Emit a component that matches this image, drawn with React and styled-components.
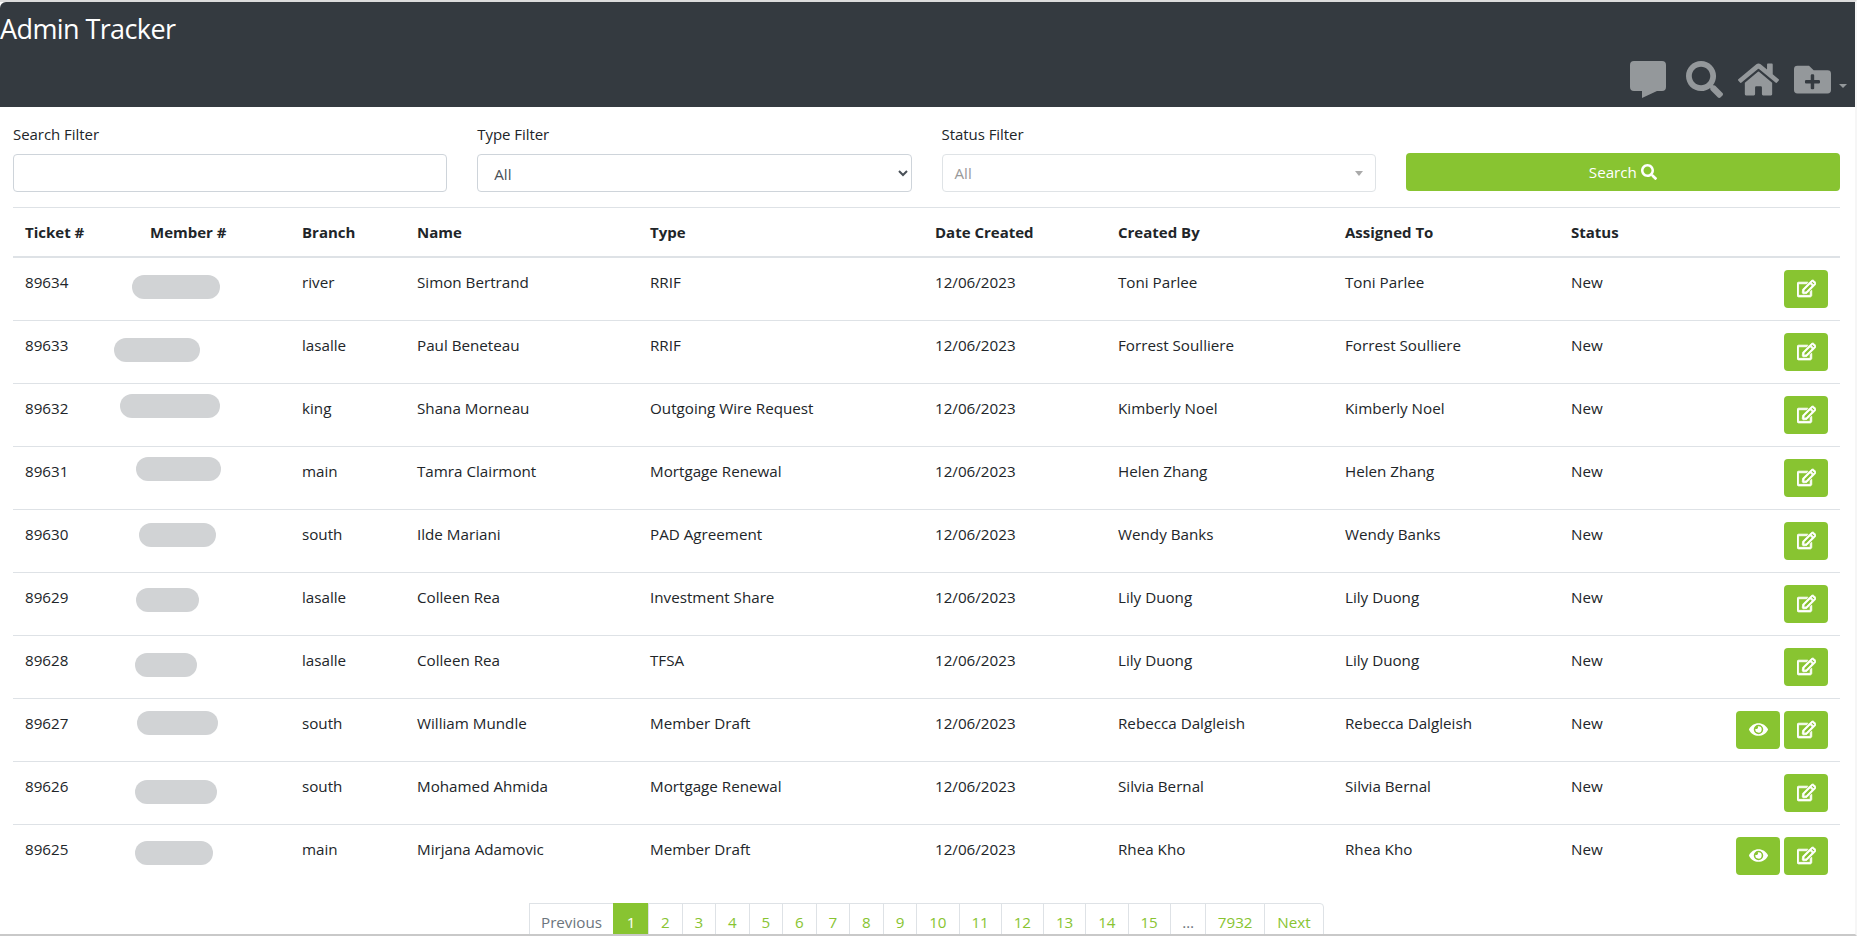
import React from "react";
import styled, { createGlobalStyle } from "styled-components";
import { FaSearch, FaHome, FaFolderPlus, FaRegEdit, FaEye } from "react-icons/fa";

const GlobalStyle = createGlobalStyle`
    html, body {
        margin: 0;
        height: 100%;
        overflow: hidden;
        background-color: #fff;
    }

    body {
        font-family: "Open Sans", "Liberation Sans", sans-serif;
        font-size: 15.2px;
        color: #212529;
    }
`;

const COLUMNS = [
    { title: "Ticket #", width: 125 },
    { title: "Member #", width: 152 },
    { title: "Branch", width: 115 },
    { title: "Name", width: 233 },
    { title: "Type", width: 285 },
    { title: "Date Created", width: 183 },
    { title: "Created By", width: 227 },
    { title: "Assigned To", width: 226 },
    { title: "Status", width: 281 },
];

// blob = the greyed out member number, offsets are from the member cell
const TICKETS = [
    { id: 89634, branch: "river", name: "Simon Bertrand", type: "RRIF", staff: "Toni Parlee", blob: [-6, 17, 88] },
    { id: 89633, branch: "lasalle", name: "Paul Beneteau", type: "RRIF", staff: "Forrest Soulliere", blob: [-24, 17, 86] },
    { id: 89632, branch: "king", name: "Shana Morneau", type: "Outgoing Wire Request", staff: "Kimberly Noel", blob: [-18, 10, 100] },
    { id: 89631, branch: "main", name: "Tamra Clairmont", type: "Mortgage Renewal", staff: "Helen Zhang", blob: [-2, 10, 85] },
    { id: 89630, branch: "south", name: "Ilde Mariani", type: "PAD Agreement", staff: "Wendy Banks", blob: [1, 13, 77] },
    { id: 89629, branch: "lasalle", name: "Colleen Rea", type: "Investment Share", staff: "Lily Duong", blob: [-2, 15, 63] },
    { id: 89628, branch: "lasalle", name: "Colleen Rea", type: "TFSA", staff: "Lily Duong", blob: [-3, 17, 62] },
    { id: 89627, branch: "south", name: "William Mundle", type: "Member Draft", staff: "Rebecca Dalgleish", blob: [-1, 12, 81], viewable: true },
    { id: 89626, branch: "south", name: "Mohamed Ahmida", type: "Mortgage Renewal", staff: "Silvia Bernal", blob: [-3, 18, 82] },
    { id: 89625, branch: "main", name: "Mirjana Adamovic", type: "Member Draft", staff: "Rhea Kho", blob: [-3, 16, 78], viewable: true },
];

const PAGES = ["1", "2", "3", "4", "5", "6", "7", "8", "9", "10", "11", "12", "13", "14", "15", "…", "7932"];

function pageWidth(page) {
    if (page === "1") return 36;
    if (page === "…") return 36.6;
    if (page.length === 1) return 34.54;
    if (page.length === 2) return 43.25;
    return 59.6;
}

function CommentIcon() {
    return (
        <svg width="36" height="37" viewBox="0 0 36 37" fill="currentColor">
            <path d="M4 0h28a4 4 0 0 1 4 4v22a4 4 0 0 1-4 4H27L12 37v-7H4a4 4 0 0 1-4-4V4a4 4 0 0 1 4-4z" />
        </svg>
    );
}

export default function App() {
    return (
        <Page>
            <GlobalStyle />
            <Header>
                <Title>Admin Tracker</Title>
                <HeaderIcons>
                    <HeaderIcon $gap={20}><CommentIcon /></HeaderIcon>
                    <HeaderIcon $gap={15}><FaSearch size={37} /></HeaderIcon>
                    <HeaderIcon $gap={15}><FaHome size={41} /></HeaderIcon>
                    <HeaderIcon $gap={8}><FaFolderPlus size={37} /></HeaderIcon>
                    <Caret />
                </HeaderIcons>
            </Header>

            <Filters>
                <Field>
                    <Label>Search Filter</Label>
                    <TextInput type="text" />
                </Field>
                <Field>
                    <Label>Type Filter</Label>
                    <NativeSelect defaultValue="All">
                        <option>All</option>
                    </NativeSelect>
                </Field>
                <Field>
                    <Label>Status Filter</Label>
                    <FakeSelect>
                        All
                        <FakeSelectArrow />
                    </FakeSelect>
                </Field>
                <SearchButton>
                    Search <FaSearch size={16} />
                </SearchButton>
            </Filters>

            <Table>
                <colgroup>
                    {COLUMNS.map((column) => (
                        <col key={column.title} width={column.width} />
                    ))}
                </colgroup>
                <thead>
                    <tr>
                        {COLUMNS.map((column) => (
                            <HeadCell key={column.title}>{column.title}</HeadCell>
                        ))}
                    </tr>
                </thead>
                <tbody>
                    {TICKETS.map((ticket) => (
                        <Row key={ticket.id}>
                            <Cell>{ticket.id}</Cell>
                            <Cell>
                                <Redacted $left={ticket.blob[0]} $top={ticket.blob[1]} $width={ticket.blob[2]} />
                            </Cell>
                            <Cell>{ticket.branch}</Cell>
                            <Cell>{ticket.name}</Cell>
                            <Cell>{ticket.type}</Cell>
                            <Cell>12/06/2023</Cell>
                            <Cell>{ticket.staff}</Cell>
                            <Cell>{ticket.staff}</Cell>
                            <Cell>
                                <StatusCell>
                                    New
                                    <Actions>
                                        {ticket.viewable && <ActionButton><FaEye size={19} /></ActionButton>}
                                        <ActionButton><FaRegEdit size={19} stroke="currentColor" strokeWidth={24} /></ActionButton>
                                    </Actions>
                                </StatusCell>
                            </Cell>
                        </Row>
                    ))}
                </tbody>
            </Table>

            <Pagination>
                <PageLink $muted $width={85}>Previous</PageLink>
                {PAGES.map((page) => (
                    <PageLink key={page} $width={pageWidth(page)} $active={page === "1"} $muted={page === "…"}>{page}</PageLink>
                ))}
                <PageLink $width={60} $last>Next</PageLink>
            </Pagination>
        </Page>
    );
}

const Page = styled.div`
    height: 100vh;
    box-sizing: border-box;
    overflow: hidden;
    background-color: white;
    border-top: 2px solid #dcdcdc;
    border-bottom: 2px solid #c9c9c9;
    border-right: 2px solid #f6f6f6;
`;

const Header = styled.div`
    height: 105px;
    box-sizing: border-box;
    background-color: #343a40;
    border-top-left-radius: 6px;
    display: flex;
    flex-direction: column;
    justify-content: space-between;
    padding: 5px 8px 9px 0;
`;

const Title = styled.div`
    font-size: 27px;
    line-height: 44px;
    color: white;
    letter-spacing: -0.6px;
`;

const HeaderIcons = styled.div`
    display: flex;
    justify-content: flex-end;
    align-items: center;
    height: 37px;
    color: #94989b;
`;

const HeaderIcon = styled.span`
    display: flex;
    margin-right: ${(props) => props.$gap}px;
`;

const Caret = styled.span`
    width: 0;
    height: 0;
    margin-top: 12px;
    border-top: 4px solid #94989b;
    border-left: 4px solid transparent;
    border-right: 4px solid transparent;
`;

const Filters = styled.div`
    display: grid;
    grid-template-columns: repeat(4, 1fr);
    column-gap: 30px;
    align-items: end;
    padding: 0 15px 15px 13px;
    height: 100px;
    box-sizing: border-box;
`;

const Field = styled.div`
    display: flex;
    flex-direction: column;
    gap: 8px;
`;

const Label = styled.label`
    font-size: 15px;
    line-height: 24px;
    letter-spacing: -0.05px;
`;

const TextInput = styled.input`
    height: 38px;
    box-sizing: border-box;
    border: 1px solid #ced4da;
    border-radius: 4px;
    background-color: white;
    outline: none;
`;

const NativeSelect = styled.select`
    height: 38px;
    box-sizing: border-box;
    border: 1px solid #ced4da;
    border-radius: 4px;
    background-color: white;
    color: #495057;
    font: inherit;
    padding: 1px 12px 0;
`;

const FakeSelect = styled.div`
    position: relative;
    height: 38px;
    box-sizing: border-box;
    border: 1px solid #dfe3e6;
    border-radius: 4px;
    color: #999;
    padding-left: 12px;
    line-height: 36px;
`;

const FakeSelectArrow = styled.span`
    position: absolute;
    right: 12px;
    top: 16px;
    border-top: 5px solid #aaa;
    border-left: 4px solid transparent;
    border-right: 4px solid transparent;
`;

const SearchButton = styled.button`
    height: 38px;
    margin-bottom: 1px;
    border: none;
    border-radius: 4px;
    background-color: #88c431;
    color: white;
    font: inherit;
    font-size: 15.2px;
    display: flex;
    align-items: center;
    justify-content: center;
    gap: 4px;
`;

const Table = styled.table`
    width: 1827px;
    margin-left: 13px;
    table-layout: fixed;
    border-collapse: collapse;
    text-align: left;
`;

const HeadCell = styled.th`
    height: 49px;
    box-sizing: border-box;
    padding: 12px 12px 11px;
    line-height: 24px;
    font-size: 15px;
    font-weight: 700;
    border-top: 1px solid #dee2e6;
    border-bottom: 2px solid #dee2e6;
`;

const Row = styled.tr`
    border-bottom: 1px solid #dee2e6;

    &:last-child {
        border-bottom: none;
    }
`;

const Cell = styled.td`
    position: relative;
    padding: 12px;
    height: 62px;
    box-sizing: border-box;
    line-height: 24px;
    vertical-align: top;
`;

const Redacted = styled.span`
    position: absolute;
    left: ${(props) => props.$left}px;
    top: ${(props) => props.$top}px;
    width: ${(props) => props.$width}px;
    height: 24px;
    border-radius: 12px;
    background-color: #d1d3d5;
`;

const StatusCell = styled.div`
    display: flex;
    justify-content: space-between;
    align-items: flex-start;
`;

const Actions = styled.div`
    display: flex;
    gap: 4px;
`;

const ActionButton = styled.button`
    width: 44px;
    height: 38px;
    padding: 0;
    border: none;
    border-radius: 4px;
    background-color: #88c431;
    color: white;
    display: flex;
    align-items: center;
    justify-content: center;
`;

const Pagination = styled.div`
    display: flex;
    justify-content: flex-start;
    margin-top: 16px;
    padding-left: 530px;
`;

const PageLink = styled.a`
    flex: none;
    box-sizing: border-box;
    height: 40px;
    width: ${(props) => props.$width}px;
    line-height: 36px;
    text-align: center;
    white-space: nowrap;
    border: 1px solid #dee2e6;
    margin-left: -1px;
    border-top-right-radius: ${(props) => (props.$last ? "4px" : "0")};
    color: ${(props) => (props.$active ? "white" : props.$muted ? "#6c757d" : "#88c431")};
    background-color: ${(props) => (props.$active ? "#88c431" : "white")};
    border-color: ${(props) => (props.$active ? "#88c431" : "#dee2e6")};
`;
